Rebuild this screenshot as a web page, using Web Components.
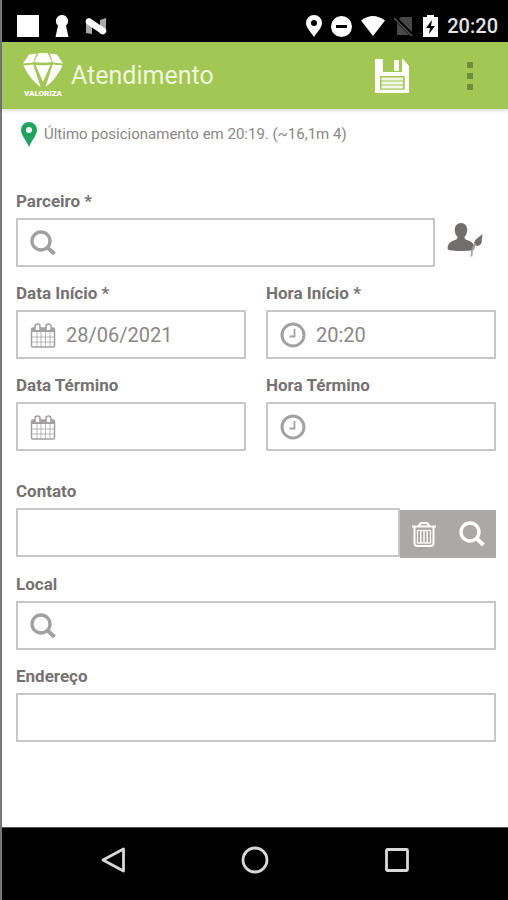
<!DOCTYPE html>
<html lang="pt-BR">
<head>
<meta charset="utf-8">
<meta name="viewport" content="width=device-width, initial-scale=1">
<title>Atendimento</title>
<style>
  :root {
    --green: #a3c754;
    --label: #767272;
    --text: #8a8787;
    --icon: #a3a0a0;
    --border: #c8c7c7;
    --tool: #aca8a6;
  }
  body { margin: 0; background: #fff; font-family: Roboto, "Liberation Sans", sans-serif; }
</style>
</head>
<body>
<app-shell>
  <status-bar slot="top" time="20:20"></status-bar>
  <app-bar slot="top" brand="VALORIZA">Atendimento</app-bar>
  <location-note>Último posicionamento em 20:19. (~16,1m 4)</location-note>
  <form-section>
    <form-field label="Parceiro *" icon="search" wide>
      <icon-button slot="side" icon="person" label="Editar parceiro"></icon-button>
    </form-field>
    <form-field label="Data Início *" icon="calendar" value="28/06/2021"></form-field>
    <form-field label="Hora Início *" icon="clock" value="20:20"></form-field>
    <form-field label="Data Término" icon="calendar"></form-field>
    <form-field label="Hora Término" icon="clock"></form-field>
  </form-section>
  <form-section>
    <form-field label="Contato" wide>
      <icon-button slot="tools" icon="trash" label="Remover contato"></icon-button>
      <icon-button slot="tools" icon="search" label="Buscar contato"></icon-button>
    </form-field>
    <form-field label="Local" icon="search" wide></form-field>
    <form-field label="Endereço" wide></form-field>
  </form-section>
  <nav-bar slot="bottom"></nav-bar>
</app-shell>

<script>
const ICONS = {
  search: `<svg width="26" height="26" viewBox="0 0 26 26" fill="none" stroke="currentColor"><circle cx="11" cy="11" r="9" stroke-width="3.4"/><path d="M17.500 17.500L24.500 24" stroke-width="4"/></svg>`,
  calendar: `<svg width="26" height="26" viewBox="0 0 26 26" fill="none" stroke="currentColor"><rect x="1.500" y="6" width="23" height="19" rx="1.500" stroke-width="1.500"/><path d="M2 8h22" stroke-width="4"/><path d="M7 10v15M11 10v15M15.500 10v15M20 10v15M2 15h22M2 20h22" stroke-width="1" opacity=".75"/><path d="M5 8V4.500a2.500 2.500 0 0 1 5 0V8M16 8V4.500a2.500 2.500 0 0 1 5 0V8" fill="#fff" stroke-width="1.600"/></svg>`,
  clock: `<svg width="26" height="26" viewBox="0 0 26 26" fill="none" stroke="currentColor"><circle cx="13" cy="13" r="11" stroke-width="3"/><path d="M14.500 7v7.500H9.500" stroke-width="1.800"/></svg>`,
  trash: `<svg width="24" height="26" viewBox="0 0 24 26" fill="none" stroke="currentColor"><path d="M0 5.500h24" stroke-width="2"/><path d="M6.500 5l2.500-3h6l2.500 3" stroke-width="2"/><path d="M2.500 6v16q0 3 3 3h13q3 0 3-3V6" stroke-width="2"/><rect x="5.500" y="9.500" width="13" height="12.500" stroke-width="1.200"/><path d="M8.800 10v12M12 10v12M15.200 10v12" stroke-width="1.400"/></svg>`,
  person: `<svg width="36" height="34" viewBox="0 0 36 34" fill="#726e6d"><path d="M14 0c4 0 6.200 3 6.200 7 0 3-1 5.200-2.700 6.800 0 2 .5 2.600 3 3.400 4.600 1.500 7 3.500 7 8.300-.2 1.800-4 2.500-13.500 2.500S.5 27.300.5 25.500c.3-4.800 2.500-6.800 7-8.300 2.500-.8 3-1.400 3-3.400C8.800 12.200 7.800 10 7.800 7c0-4 2.200-7 6.200-7z"/><path d="M35.500 11l-1 9q-1.500 3-4.500 3l-3-1.500q0-4 3-6z"/><path d="M28.500 20.500l-3.500 7-.500 6" fill="none" stroke="#a5a2a1" stroke-width="1.800"/></svg>`,
  save: `<svg width="36" height="36" viewBox="0 0 36 36"><path fill="#fff" fill-rule="evenodd" d="M1 1h8v13h19V1h1l6 7v26a1 1 0 0 1-1 1H2a1 1 0 0 1-1-1zM6 18v13.500h24.500V18z"/><rect x="20" y="2" width="5" height="11" rx="1" fill="#fff"/><rect x="6" y="18" width="24.500" height="13.500" fill="#a3c754"/><path fill="#f3f6e6" d="M7.500 19.500h21.500v3H7.500zM7.500 23.500h21.500v3H7.500zM7.500 27.500h21.500v3H7.500z"/></svg>`,
  more: `<svg width="8" height="30" viewBox="0 0 8 30" fill="#728c3c"><path d="M1 1h6v6H1zM1 12h6v6H1zM1 23h6v6H1z"/></svg>`,
  diamond: `<svg width="40" height="35" viewBox="0 0 40 35" fill="#fff"><path d="M6 1.500L13.500.5 10 9.500 0 10.500zM15.500 0h9l4.500 9q-9 1.500-18 0zM26.500.5L34 1.500l6 9-10-1zM.3 12.500l10-1L17.500 34q-10-7-17.200-21.500zM12.500 11.700q7.500 1 15 0L20 29zM39.700 12.500l-10-1L22.500 34q10-7 17.200-21.500z"/></svg>`,
  pin: `<svg width="16" height="25" viewBox="0 0 16 25"><path fill="#22a25f" fill-rule="evenodd" d="M8 0a8 8 0 0 1 8 8c0 5-5 10-8 17C5 18 0 13 0 8a8 8 0 0 1 8-8zm0 5a3 3 0 1 0 0 6 3 3 0 0 0 0-6z"/></svg>`,
  back: `<svg width="26" height="28" viewBox="0 0 26 28" fill="none" stroke="#d8d8d8" stroke-width="2.800" stroke-linejoin="round"><path d="M23.500 3v22L3 14z"/></svg>`,
  home: `<svg width="28" height="28" viewBox="0 0 28 28" fill="none" stroke="#d8d8d8" stroke-width="2.800"><circle cx="14" cy="14" r="12"/></svg>`,
  recents: `<svg width="26" height="26" viewBox="0 0 26 26" fill="none" stroke="#d8d8d8" stroke-width="2.800"><rect x="2.500" y="2.500" width="21" height="21" rx="1"/></svg>`,
};

class AppShell extends HTMLElement {
  constructor() {
    super();
    this.attachShadow({ mode: 'open' }).innerHTML = `
      <style>
        :host { display: flex; flex-direction: column; min-height: 100vh; box-sizing: border-box; border-left: 2px solid #777; background: #fff; }
        header { position: relative; }
        main { flex: 1; padding: 13px 12px 24px 14px; }
      </style>
      <header><slot name="top"></slot></header>
      <main><slot></slot></main>
      <footer><slot name="bottom"></slot></footer>
    `;
  }
}

class StatusBar extends HTMLElement {
  connectedCallback() {
    this.attachShadow({ mode: 'open' }).innerHTML = `
      <style>
        :host { display: flex; justify-content: space-between; align-items: center; height: 42px; box-sizing: border-box; padding: 10px 10px 0 15px; background: #000; color: #e4e4e4; }
        div { display: flex; align-items: center; }
        .left { gap: 16px; }
        .right { gap: 9px; }
        svg { display: block; }
        span { font-size: 20px; line-height: 24px; font-weight: 500; }
      </style>
      <div class="left">
        <svg width="22" height="22"><path fill="#fff" d="M0 0h22v22H0z"/></svg>
        <svg width="14" height="22" viewBox="0 0 14 22"><path fill="#fff" d="M7 0a6 6 0 0 1 4 10.500L13.500 22H.5L3 10.500A6 6 0 0 1 7 0z"/></svg>
        <svg width="22" height="18" viewBox="0 0 22 18"><path fill="#aaa" d="M1 2l6 1v14l-6-1zM15 3l6-2v14l-6 2z"/><path d="M4 4.500L18 14" stroke="#fff" stroke-width="6.500" stroke-linecap="round"/></svg>
      </div>
      <div class="right">
        <svg width="16" height="22" viewBox="0 0 16 22"><path fill="#fff" fill-rule="evenodd" d="M8 0a8 8 0 0 1 8 8c0 5-5 9-8 14C5 17 0 13 0 8a8 8 0 0 1 8-8zm0 5a3 3 0 1 0 0 6 3 3 0 0 0 0-6z"/></svg>
        <svg width="21" height="21" viewBox="0 0 21 21"><circle cx="10.500" cy="10.500" r="10.500" fill="#fff"/><path d="M5 9h11v3H5z"/></svg>
        <svg width="24" height="20" viewBox="0 0 24 20"><path fill="#fff" d="M0 4.500q12-9 24 0L12 20z"/></svg>
        <svg width="20" height="20" viewBox="0 0 20 20"><path fill="#484848" d="M7 1h11v18H3V5z"/><path d="M1 2l17 17" stroke="#000" stroke-width="4"/><path d="M0 2l18 18" stroke="#555" stroke-width="1.500"/></svg>
        <svg width="15" height="22" viewBox="0 0 15 22"><path fill="#fff" d="M4 0h7v2h4v20H0V2h4z"/><path d="M9 5l-6 8h4l-1 6 6-8H8z"/></svg>
        <span>${this.getAttribute('time')}</span>
      </div>
    `;
  }
}

class AppBar extends HTMLElement {
  connectedCallback() {
    this.attachShadow({ mode: 'open' }).innerHTML = `
      <style>
        :host { display: flex; align-items: center; height: 67px; padding: 0 34px 0 20px; box-sizing: border-box; background: var(--green); box-shadow: 0 1px 4px rgba(0,0,0,.2); }
        .brand { display: flex; flex-direction: column; align-items: center; gap: 2px; width: 42px; color: #fff; font-size: 8px; line-height: 8px; font-weight: 900; }
        h1 { flex: 1; margin: 0 0 0 7px; color: #eef6dc; font-size: 25px; line-height: 32px; font-weight: 400; }
        svg { display: block; }
        button { padding: 0; border: 0; background: none; cursor: pointer; }
        .save { margin-right: 56px; }
      </style>
      <div class="brand">${ICONS.diamond}<span>${this.getAttribute('brand')}</span></div>
      <h1><slot></slot></h1>
      <button class="save" aria-label="Salvar">${ICONS.save}</button>
      <button aria-label="Mais opções">${ICONS.more}</button>
    `;
  }
}

class LocationNote extends HTMLElement {
  constructor() {
    super();
    this.attachShadow({ mode: 'open' }).innerHTML = `
      <style>
        :host { display: flex; align-items: center; gap: 7px; padding-left: 5px; margin-bottom: 44px; color: var(--text); font-size: 15px; line-height: 25px; }
        svg { display: block; }
      </style>
      ${ICONS.pin}<span><slot></slot></span>
    `;
  }
}

class FormSection extends HTMLElement {
  constructor() {
    super();
    this.attachShadow({ mode: 'open' }).innerHTML = `
      <style>
        :host { display: grid; grid-template-columns: 1fr 1fr; gap: 16px 20px; margin-bottom: 30px; }
        ::slotted([wide]) { grid-column: 1 / -1; }
      </style>
      <slot></slot>
    `;
  }
}

class FormField extends HTMLElement {
  connectedCallback() {
    const icon = this.getAttribute('icon');
    this.attachShadow({ mode: 'open' }).innerHTML = `
      <style>
        :host { display: block; min-width: 0; }
        label { display: block; margin-bottom: 7px; color: var(--label); font-size: 17px; line-height: 20px; font-weight: 700; }
        .row { display: flex; align-items: flex-start; }
        .box { flex: 1; min-width: 0; display: flex; align-items: center; gap: 10px; height: 49px; box-sizing: border-box; padding: 0 12px; border: 2px solid var(--border); border-radius: 1px; color: var(--icon); }
        .box:focus-within { border-color: var(--green); }
        svg { display: block; flex: none; }
        input { flex: 1; min-width: 0; padding: 0; border: 0; outline: 0; background: none; color: var(--text); font-family: inherit; font-size: 20px; line-height: 24px; }
        ::slotted([slot="tools"]) { margin-top: 2px; background: var(--tool); color: #fff; }
      </style>
      <label for="field">${this.getAttribute('label')}</label>
      <div class="row">
        <div class="box">${icon ? ICONS[icon] : ''}<input id="field" type="text" autocomplete="off"></div>
        <slot name="tools"></slot>
        <slot name="side"></slot>
      </div>
    `;
    this.shadowRoot.querySelector('input').value = this.getAttribute('value') || '';
  }
}

class IconButton extends HTMLElement {
  connectedCallback() {
    this.attachShadow({ mode: 'open' }).innerHTML = `
      <style>
        :host { display: block; width: 48px; }
        :host([slot="side"]) { width: 61px; }
        button { display: flex; align-items: center; justify-content: center; width: 100%; height: 48px; padding: 0; border: 0; background: none; color: inherit; cursor: pointer; }
        :host([slot="side"]) button { height: 44px; padding-right: 2px; }
        svg { display: block; }
      </style>
      <button type="button" aria-label="${this.getAttribute('label')}">${ICONS[this.getAttribute('icon')]}</button>
    `;
  }
}

class NavBar extends HTMLElement {
  constructor() {
    super();
    this.attachShadow({ mode: 'open' }).innerHTML = `
      <style>
        :host { display: flex; justify-content: center; height: 73px; box-sizing: border-box; padding-bottom: 8px; border-top: 1px solid #555; background: #000; }
        button { display: flex; align-items: center; justify-content: center; width: 28%; padding: 0; border: 0; background: none; cursor: pointer; }
      </style>
      <button aria-label="Voltar">${ICONS.back}</button>
      <button aria-label="Início">${ICONS.home}</button>
      <button aria-label="Recentes">${ICONS.recents}</button>
    `;
  }
}

customElements.define('app-shell', AppShell);
customElements.define('status-bar', StatusBar);
customElements.define('app-bar', AppBar);
customElements.define('location-note', LocationNote);
customElements.define('form-section', FormSection);
customElements.define('form-field', FormField);
customElements.define('icon-button', IconButton);
customElements.define('nav-bar', NavBar);
</script>
</body>
</html>
